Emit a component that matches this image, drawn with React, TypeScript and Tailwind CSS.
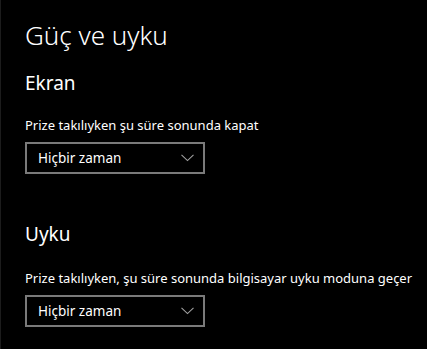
function Dropdown({ value }: { value: string }) {
  return (
    <div className="flex h-[32px] w-[180px] items-center justify-between border-2 border-[#7a7a7a] pl-[11px] pr-[8px]">
      <span className="text-[13.5px] leading-[18px] text-white">{value}</span>
      <svg width="13" height="8" viewBox="0 0 13 8" className="mr-[1px]">
        <path d="M0.5 0.8 L6.5 6.6 L12.5 0.8" fill="none" stroke="#a0a0a0" strokeWidth="1.1" />
      </svg>
    </div>
  );
}

export default function App() {
  return (
    <div
      className="h-[349px] w-[427px] overflow-hidden border-l border-[#1c1c1c] bg-black pl-[24px] text-white"
      style={{ fontFamily: '"Noto Sans", "Open Sans", sans-serif' }}
    >
      {/* Başlık */}
      <h1 className="pt-[18px] text-[26px] font-light leading-[34px]">Güç ve uyku</h1>

      {/* Ekran */}
      <h2 className="mt-[19px] text-[19px] leading-[24px]">Ekran</h2>
      <p className="mt-[21px] text-[13px] leading-[18px]">Prize takılıyken şu süre sonunda kapat</p>
      <div className="mt-[8px]">
        <Dropdown value="Hiçbir zaman" />
      </div>

      {/* Uyku */}
      <h2 className="mt-[48px] text-[19px] leading-[24px]">Uyku</h2>
      <p className="mt-[23px] text-[13px] leading-[18px]">
        Prize takılıyken, şu süre sonunda bilgisayar uyku moduna geçer
      </p>
      <div className="mt-[8px]">
        <Dropdown value="Hiçbir zaman" />
      </div>
    </div>
  );
}
